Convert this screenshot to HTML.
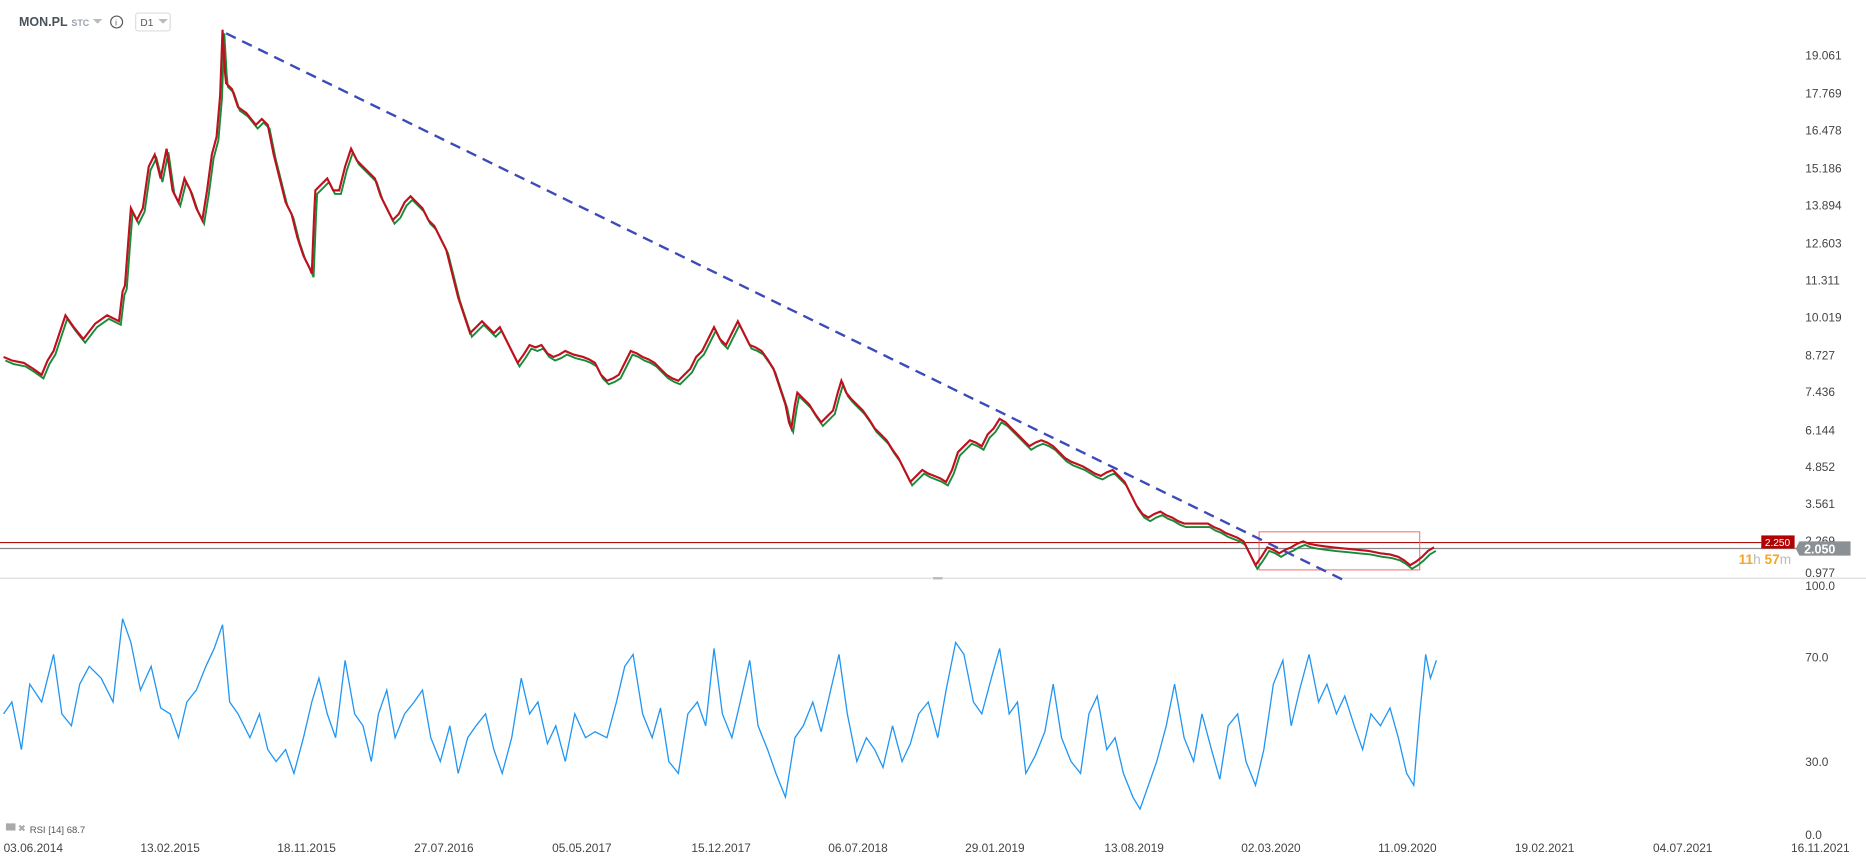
<!DOCTYPE html>
<html><head><meta charset="utf-8"><style>
html,body{margin:0;padding:0;background:#fff;width:1866px;height:865px;overflow:hidden}
svg{display:block}
text{font-family:"Liberation Sans",sans-serif}
</style></head><body>
<svg width="1866" height="865" viewBox="0 0 1568 727" preserveAspectRatio="none">
<defs>
<polyline id="pl" fill="none" points="3,300 10,303 20,305 28,310 35,315 40,303 45,295 50,280 55,265 62,275 70,285 80,272 90,265 100,270 103,245 105,240 108,200 110,175 115,185 120,175 125,140 130,130 135,150 140,125 145,160 150,170 155,150 160,160 165,175 170,185 174,160 178,130 182,115 185,80 187,25 189,60 190,70 195,75 200,90 207,95 215,105 220,100 225,105 230,130 235,150 240,170 245,180 250,200 255,215 260,225 262,230 264,180 265,160 270,155 275,150 280,160 285,160 290,140 295,125 300,135 305,140 310,145 315,150 320,165 325,175 330,185 335,180 340,170 345,165 350,170 355,175 360,185 365,190 370,200 375,210 380,230 385,250 390,265 395,280 400,275 405,270 410,275 415,280 420,275 425,285 430,295 435,305 440,298 445,290 450,292 455,290 460,297 465,300 470,298 475,295 482,298 490,300 495,302 500,305 505,315 510,320 515,318 520,315 525,305 530,295 535,297 540,300 545,302 550,305 555,310 560,315 565,318 570,320 575,315 580,310 585,300 590,295 595,285 600,275 605,285 610,290 615,280 620,270 625,280 630,290 635,292 640,295 645,302 650,310 655,325 660,340 663,355 665,360 668,340 670,330 675,335 680,340 685,348 690,355 695,350 700,345 704,330 707,320 711,330 715,335 720,340 725,345 730,352 735,360 740,365 745,370 750,378 755,385 760,395 765,405 770,400 775,395 780,398 785,400 790,402 795,405 800,395 805,380 810,375 815,370 820,372 825,375 830,365 835,360 840,352 845,355 850,360 855,365 860,370 865,375 870,372 875,370 880,372 885,375 890,380 895,385 900,388 905,390 910,392 915,395 920,398 925,400 930,397 935,395 940,400 945,405 950,415 955,425 960,432 965,435 970,432 975,430 980,433 985,435 990,438 995,440 1000,440 1005,440 1010,440 1015,440 1020,443 1025,445 1030,448 1035,450 1040,452 1045,455 1050,465 1055,475 1060,468 1065,460 1070,462 1075,465 1080,462 1085,460 1090,457 1095,455 1100,457 1105,458 1112,459 1120,460 1130,461 1140,462 1150,463 1160,465 1168,466 1175,468 1180,471 1185,475 1190,472 1195,468 1200,463 1205,460"/>
</defs>
<!-- header -->
<text x="16" y="22" font-size="10.5" font-weight="bold" fill="#4a5259">MON.PL</text>
<text x="60" y="22" font-size="7.5" font-weight="bold" fill="#99a2aa">STC</text>
<path d="M78 16l4 4 4-4z" fill="#bbb"/>
<circle cx="98" cy="18.5" r="5" fill="none" stroke="#555" stroke-width="1"/>
<text x="96.8" y="21.5" font-size="7" fill="#555">i</text>
<rect x="114" y="11" width="29" height="15" rx="2" fill="#fff" stroke="#ddd"/>
<text x="118" y="22" font-size="8.5" fill="#555">D1</text>
<path d="M133 16l4 4 4-4z" fill="#bbb"/>
<!-- price axis labels -->
<g font-size="10" fill="#444">
<text x="1517" y="50">19.061</text><text x="1517" y="82">17.769</text><text x="1517" y="113">16.478</text>
<text x="1517" y="145">15.186</text><text x="1517" y="176">13.894</text><text x="1517" y="208">12.603</text>
<text x="1517" y="239">11.311</text><text x="1517" y="270">10.019</text><text x="1517" y="302">8.727</text>
<text x="1517" y="333">7.436</text><text x="1517" y="365">6.144</text><text x="1517" y="396">4.852</text>
<text x="1517" y="427">3.561</text><text x="1517" y="458">2.269</text><text x="1517" y="485">0.977</text>
<text x="1517" y="496">100.0</text><text x="1517" y="556">70.0</text><text x="1517" y="644">30.0</text><text x="1517" y="705">0.0</text>
</g>
<line x1="0" y1="486" x2="1568" y2="486" stroke="#ddd"/>
<rect x="784" y="485" width="8" height="2" fill="#bbb"/>
<!-- horizontal lines -->
<line x1="0" y1="456" x2="1480" y2="456" stroke="#b01010" stroke-width="1"/>
<line x1="0" y1="461" x2="1512" y2="461" stroke="#888" stroke-width="1"/>
<rect x="1480" y="450" width="28" height="11" fill="#b30000"/>
<text x="1483" y="459" font-size="8.5" fill="#fff">2.250</text>
<path d="M1512 455H1555V467H1512L1509 461Z" fill="#8a9094"/>
<text x="1516" y="465" font-size="10.5" font-weight="bold" fill="#fff">2.050</text>
<text x="1461" y="474" font-size="11.5" font-weight="bold" fill="#f5a623">11<tspan fill="#bbb" font-weight="normal">h</tspan> 57<tspan fill="#bbb" font-weight="normal">m</tspan></text>
<!-- box -->
<rect x="1058" y="447" width="135" height="32" fill="none" stroke="#e66" stroke-width="0.8"/>
<!-- price line -->
<use href="#pl" stroke="#1a8a3a" stroke-width="1.6" transform="translate(1.5,3)"/>
<use href="#pl" stroke="#c0101e" stroke-width="1.8"/>
<!-- dashed trendline -->
<line x1="190" y1="28" x2="1130" y2="488" stroke="#3d4bb8" stroke-width="2" stroke-dasharray="9,6"/>
<!-- RSI -->
<polyline fill="none" stroke="#2196f3" stroke-width="1.1" points="3,600 10,590 18,630 25,575 35,590 45,550 52,600 60,610 67,575 75,560 85,570 95,590 103,520 110,540 118,580 127,560 135,595 143,600 150,620 157,590 165,580 173,560 180,545 187,525 193,590 200,600 210,620 218,600 225,630 232,640 240,630 247,650 255,620 262,590 268,570 275,600 282,620 290,555 298,600 305,610 312,640 318,600 325,580 332,620 340,600 348,590 355,580 362,620 370,640 378,610 385,650 393,620 400,610 408,600 415,630 422,650 430,620 438,570 445,600 452,590 460,625 467,610 475,640 483,600 492,620 500,615 510,620 518,590 525,560 532,550 540,600 548,620 555,595 562,640 570,650 578,600 586,590 593,610 600,545 607,600 615,620 622,590 630,555 637,610 645,630 652,650 660,670 668,620 675,610 683,590 690,615 698,580 705,550 712,600 720,640 728,620 735,630 742,645 750,610 758,640 765,625 772,600 780,590 788,620 795,580 803,540 810,550 818,590 825,600 833,570 840,545 848,600 855,590 862,650 870,635 878,615 885,575 892,620 900,640 908,650 915,600 922,585 930,630 937,620 944,650 952,670 958,680 965,660 972,640 980,610 987,575 995,620 1003,640 1010,600 1018,630 1025,655 1032,610 1040,600 1047,640 1055,660 1062,630 1070,575 1078,555 1085,610 1092,580 1100,550 1108,590 1115,575 1123,600 1130,585 1138,610 1145,630 1152,600 1160,610 1168,595 1175,620 1182,650 1188,660 1193,600 1198,550 1202,570 1207,555"/>
<!-- RSI legend -->
<rect x="5" y="692" width="8" height="6" fill="#aaa"/>
<text x="15" y="699" font-size="8" fill="#aaa">✖</text>
<text x="25" y="700" font-size="8" fill="#555">RSI [14]  68.7</text>
<!-- date labels -->
<g font-size="10" fill="#444">
<text x="3" y="716">03.06.2014</text><text x="118" y="716">13.02.2015</text><text x="233" y="716">18.11.2015</text>
<text x="348" y="716">27.07.2016</text><text x="464" y="716">05.05.2017</text><text x="581" y="716">15.12.2017</text>
<text x="696" y="716">06.07.2018</text><text x="811" y="716">29.01.2019</text><text x="928" y="716">13.08.2019</text>
<text x="1043" y="716">02.03.2020</text><text x="1158" y="716">11.09.2020</text><text x="1273" y="716">19.02.2021</text>
<text x="1389" y="716">04.07.2021</text><text x="1505" y="716">16.11.2021</text>
</g>
</svg>
</body></html>
